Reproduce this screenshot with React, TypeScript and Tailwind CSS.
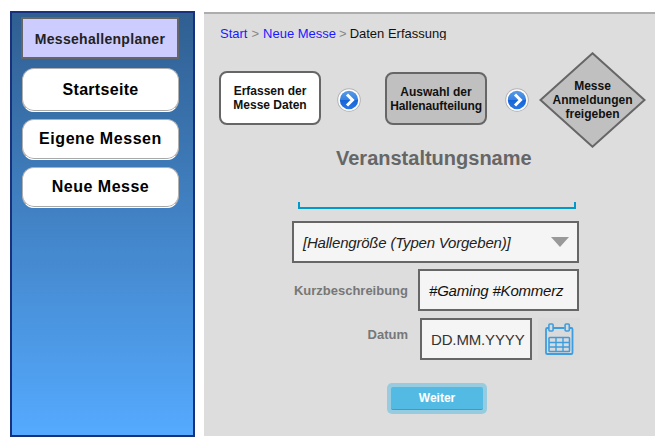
import { useId } from 'react';
import type { ReactNode } from 'react';

function NavButton({ className, children }: { className: string; children: ReactNode }) {
  return (
    <button
      className={`flex w-[157px] items-center justify-center rounded-[12px] border border-b-[#fff] border-[#b0b0b0] bg-white text-[16px] leading-[18px] font-bold text-black shadow-[inset_0_-1px_0_#a8a8a8] ${className}`}
    >
      {children}
    </button>
  );
}

function ArrowIcon() {
  const id = useId();
  return (
    <svg width="26" height="26" viewBox="0 0 26 26" className="shrink-0">
      <defs>
        <linearGradient id={id} x1="0" y1="0" x2="0" y2="1">
          <stop offset="0" stopColor="#5b9be8" />
          <stop offset="0.5" stopColor="#3580e0" />
          <stop offset="0.52" stopColor="#1565d8" />
          <stop offset="1" stopColor="#2a78e4" />
        </linearGradient>
      </defs>
      <circle cx="13" cy="13" r="11.8" fill="#b4b4b4" />
      <circle cx="13" cy="13" r="10.8" fill="#fff" />
      <circle cx="13" cy="13" r="9.2" fill={`url(#${id})`} />
      <path d="M11 7.500l5.500 5.500-5.500 5.500" fill="none" stroke="#fff" strokeWidth="3" />
    </svg>
  );
}

function CalendarIcon() {
  return (
    <svg width="42" height="42" viewBox="0 0 42 42" fill="none" stroke="#3d9ddf" className="ml-[6px] bg-[#dadada]">
      <path
        d="M11 10H9.300a1.300 1.300 0 0 0-1.300 1.300v23.400a1.300 1.300 0 0 0 1.300 1.300h23.900a1.300 1.300 0 0 0 1.300-1.300V11.300a1.300 1.300 0 0 0-1.300-1.300H31.500M15 10H26.500"
        strokeWidth="1.800"
      />
      <rect x="10.900" y="6" width="4.200" height="7" rx="1" strokeWidth="1.600" />
      <rect x="27.100" y="6" width="4.200" height="7" rx="1" strokeWidth="1.600" />
      <rect x="11" y="19.500" width="20.500" height="14" rx="0.800" strokeWidth="1.600" />
      <path d="M18 19.500v14M25 19.500v14M11 24.500h20.500M11 29h20.500" strokeWidth="1.400" />
    </svg>
  );
}

export default function App() {
  return (
    <div
      className="flex h-[445px] w-[669px] items-start overflow-hidden bg-white pt-[11px] pl-[10px]"
      style={{ fontFamily: '"Liberation Sans", Arial, sans-serif' }}
    >
      <aside className="flex h-[426px] w-[185px] shrink-0 flex-col items-start border-2 border-[#17317f] bg-linear-to-b from-[#305f91] to-[#55aaff] pt-[4px] pl-[9px]">
        <div className="flex h-[42px] w-[158px] items-center justify-center border-2 border-[#666] bg-[#ccccff] pt-[2px] text-[14px] font-bold tracking-[0.3px] text-[#222]">
          Messehallenplaner
        </div>
        <nav className="mt-[9px] ml-px flex flex-col gap-[7px]">
          <NavButton className="h-[44px] pb-px tracking-[0.3px]">Startseite</NavButton>
          <NavButton className="h-[41px] pb-[2px] tracking-[0.55px]">Eigene Messen</NavButton>
          <NavButton className="h-[41px] pb-[2px] tracking-[0.5px]">Neue Messe</NavButton>
        </nav>
      </aside>

      <main className="mt-px ml-[9px] h-[424px] w-[451px] shrink-0 border-t-2 border-[#adadad] bg-[#ddd]">
        <div className="mt-[11px] ml-[16px] flex h-[15px] gap-[4px] overflow-hidden text-[13px] leading-[17px] whitespace-nowrap text-[#111]">
          <a className="text-[#1a1aff]">Start</a>
          <span className="text-[#888]">&gt;</span>
          <a className="text-[#1a1aff]">Neue Messe</a>
          <span className="ml-[-1px] text-[#888]">&gt;</span>
          <span className="ml-[-1px]">Daten Erfassung</span>
        </div>

        <div className="mt-[12px] ml-[15px] flex h-[96px] items-center text-center text-[12px] leading-[14px] font-bold text-[#111]">
          <div className="mt-[-4px] flex h-[54px] w-[102px] items-center justify-center rounded-[8px] border-2 border-[#666] bg-white pb-px">
            <span>Erfassen der<br />Messe Daten</span>
          </div>
          <div className="ml-[15px] flex"><ArrowIcon /></div>
          <div className="mt-[-3px] ml-[23px] flex h-[53px] w-[102px] items-center justify-center rounded-[8px] border-2 border-[#666] bg-[#c0c0c0] whitespace-nowrap">
            <span>Auswahl der<br /><span className="tracking-[-0.1px]">Hallenaufteilung</span></span>
          </div>
          <div className="ml-[17px] flex"><ArrowIcon /></div>
          <div className="relative ml-[9px] flex h-[96px] w-[107px] shrink-0 items-center justify-center">
            <svg className="absolute inset-0" width="107" height="96" viewBox="0 0 107 96">
              <path d="M53.5 1.300L105.500 48L53.500 94.700L1.500 48z" fill="#c0c0c0" stroke="#666" strokeWidth="2" />
            </svg>
            <span className="relative">Messe<br />Anmeldungen<br />freigeben</span>
          </div>
        </div>

        <h1 className="mt-[-2px] ml-[132px] h-[26px] text-[20px] leading-[25px] font-bold text-[#666]">
          Veranstaltungsname
        </h1>
        <div className="mt-[30px] ml-[94px] h-[7px] w-[278px] border-x-2 border-b-2 border-[#0099cc]" />

        <div className="mt-[12px] ml-[88px] flex h-[42px] w-[287px] items-center justify-between border-2 border-[#666] bg-[#f5f5f5] pr-[8px] pl-[9px] text-[15px] tracking-[-0.2px] text-[#222] italic">
          <span className="pt-[2px]">[Hallengröße (Typen Vorgeben)]</span>
          <svg width="18" height="10" viewBox="0 0 18 10" fill="#999"><path d="M0 0h18L9 10z" /></svg>
        </div>

        <div className="mt-[6px] flex h-[42px]">
          <label className="w-[204px] pt-[13px] text-right text-[13px] leading-[18px] font-bold text-[#777]">Kurzbeschreibung</label>
          <div className="ml-[10px] flex w-[161px] items-center border-2 border-[#666] bg-[#f5f5f5] pt-[3px] pl-[9px] text-[15px] tracking-[-0.2px] whitespace-nowrap text-[#111] italic">
            #Gaming #Kommerz
          </div>
        </div>

        <div className="mt-[7px] flex h-[42px]">
          <label className="w-[204px] pt-[8px] text-right text-[13px] leading-[18px] font-bold text-[#777]">Datum</label>
          <div className="ml-[12px] flex w-[112px] items-center border-2 border-[#666] bg-[#f5f5f5] pt-[3px] pl-[9px] text-[15px] tracking-[-0.15px] whitespace-nowrap text-[#333]">
            DD.MM.YYYY
          </div>
          <CalendarIcon />
        </div>

        <button className="mt-[23px] ml-[183px] block h-[31px] w-[100px] rounded-[5px] bg-[#97cce0] p-[4px]">
          <span className="flex h-[23px] items-center justify-center rounded-[2px] border-b border-[#3d9cbf] bg-[#53bbe3] pt-px text-[12px] leading-[15px] font-bold text-white">
            Weiter
          </span>
        </button>
      </main>
    </div>
  );
}
